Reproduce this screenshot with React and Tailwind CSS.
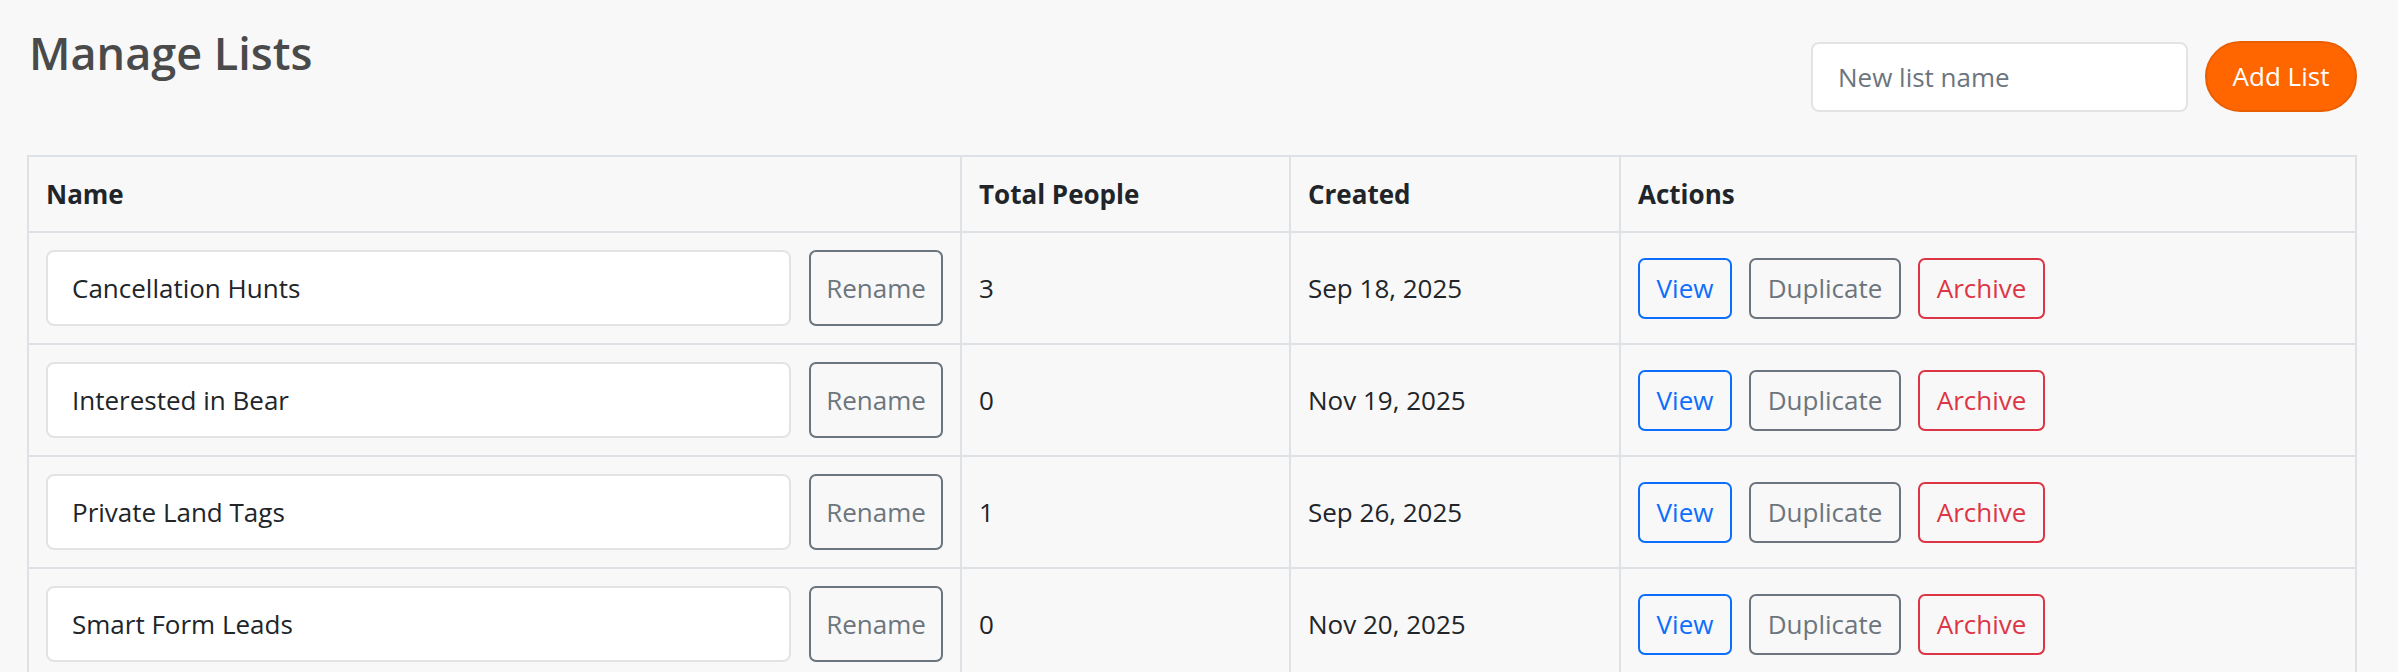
import React, { useState } from 'react';

const initialLists = [
  { id: 1, name: 'Cancellation Hunts', total: 3, created: 'Sep 18, 2025' },
  { id: 2, name: 'Interested in Bear', total: 0, created: 'Nov 19, 2025' },
  { id: 3, name: 'Private Land Tags', total: 1, created: 'Sep 26, 2025' },
  { id: 4, name: 'Smart Form Leads', total: 0, created: 'Nov 20, 2025' },
];

const ListRow = ({ list, onRename }) => {
  const [value, setValue] = useState(list.name);

  return (
    <tr>
      <td className="border-2 border-[#dee2e6] px-[17px] py-[17px]">
        <div className="flex items-center gap-[18px]">
          <input
            type="text"
            value={value}
            onChange={(e) => setValue(e.target.value)}
            className="h-[76px] flex-1 min-w-0 rounded-[8px] border-2 border-[#e3e3e3] bg-white px-[24px] text-[26px] text-[#212529] outline-none"
          />
          <button
            onClick={() => onRename(list.id, value)}
            className="h-[76px] w-[134px] shrink-0 rounded-[7px] border-2 border-[#6c757d] text-[26px] text-[#6c757d]"
          >
            Rename
          </button>
        </div>
      </td>
      <td className="border-2 border-[#dee2e6] px-[17px] text-[26px] text-[#212529]">{list.total}</td>
      <td className="border-2 border-[#dee2e6] px-[17px] text-[26px] text-[#212529]">{list.created}</td>
      <td className="border-2 border-[#dee2e6] px-[17px]">
        <div className="flex items-center gap-[17px]">
          <button className="h-[61px] w-[94px] rounded-[7px] border-2 border-[#0d6efd] text-[26px] text-[#0d6efd]">
            View
          </button>
          <button className="h-[61px] w-[152px] rounded-[7px] border-2 border-[#6c757d] text-[26px] text-[#6c757d]">
            Duplicate
          </button>
          <button className="h-[61px] w-[127px] rounded-[7px] border-2 border-[#dc3545] text-[26px] text-[#dc3545]">
            Archive
          </button>
        </div>
      </td>
    </tr>
  );
};

export default function App() {
  const [lists, setLists] = useState(initialLists);
  const [newName, setNewName] = useState('');

  const handleAdd = () => {
    if (!newName.trim()) return;
    setLists([...lists, { id: Date.now(), name: newName.trim(), total: 0, created: 'Today' }]);
    setNewName('');
  };

  const handleRename = (id, name) => {
    setLists(lists.map((l) => (l.id === id ? { ...l, name } : l)));
  };

  return (
    <div className="min-h-screen bg-[#f8f8f8] pl-[27px] pr-[41px] pt-[26px] font-['Open_Sans',sans-serif]">
      <div className="flex items-start justify-between">
        <h1 className="ml-[2px] text-[45px] font-semibold leading-[1.2] text-[#4a4a4a]">Manage Lists</h1>
        <div className="mt-[15px] flex items-center gap-[17px]">
          <input
            type="text"
            value={newName}
            onChange={(e) => setNewName(e.target.value)}
            placeholder="New list name"
            className="h-[70px] w-[377px] rounded-[8px] border-2 border-[#e3e3e3] bg-white px-[25px] text-[26px] text-[#212529] outline-none placeholder:text-[#6c757d]"
          />
          <button
            onClick={handleAdd}
            className="h-[71px] w-[152px] rounded-full border-2 border-[#e85e00] bg-[#ff6600] text-[26px] text-white"
          >
            Add List
          </button>
        </div>
      </div>

      <table className="mt-[43px] w-full table-fixed border-collapse">
        <colgroup>
          <col className="w-[933px]" />
          <col className="w-[329px]" />
          <col className="w-[330px]" />
          <col />
        </colgroup>
        <thead>
          <tr>
            <th className="border-2 border-[#dee2e6] px-[17px] py-[17px] text-left text-[26px] font-bold leading-[40px] text-[#212529]">Name</th>
            <th className="border-2 border-[#dee2e6] px-[17px] py-[17px] text-left text-[26px] font-bold leading-[40px] text-[#212529]">Total People</th>
            <th className="border-2 border-[#dee2e6] px-[17px] py-[17px] text-left text-[26px] font-bold leading-[40px] text-[#212529]">Created</th>
            <th className="border-2 border-[#dee2e6] px-[17px] py-[17px] text-left text-[26px] font-bold leading-[40px] text-[#212529]">Actions</th>
          </tr>
        </thead>
        <tbody>
          {lists.map((list) => (
            <ListRow key={list.id} list={list} onRename={handleRename} />
          ))}
        </tbody>
      </table>
    </div>
  );
}
